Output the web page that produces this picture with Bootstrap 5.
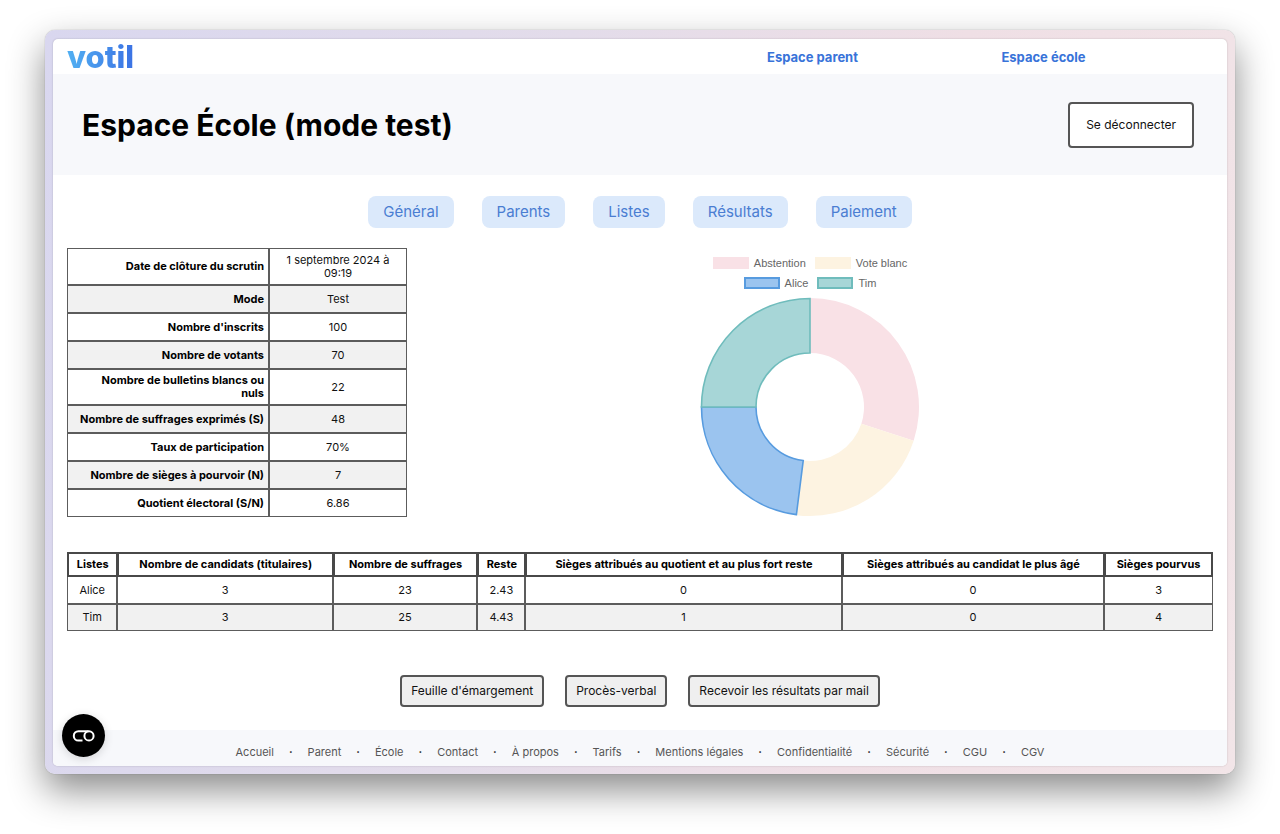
<!DOCTYPE html>
<html lang="fr">
<head>
<meta charset="utf-8">
<meta name="viewport" content="width=device-width, initial-scale=1">
<title>Votil – Espace École</title>
<link href="https://cdn.jsdelivr.net/npm/bootstrap@5.3.0/dist/css/bootstrap.min.css" rel="stylesheet">
<style>
  body { font-family: Inter, "Open Sans", sans-serif; font-size: 11px; line-height: 13px; color: #111; background: #fff; padding: 30px 45px 60px; }
  a { text-decoration: none; }
  .backdrop-frame { padding: 9px 8px 8px; border-radius: 10px; background: linear-gradient(100deg, #d9d7ef 0%, #e3dcea 40%, #efdfe5 70%, #f2e5e8 100%); box-shadow: 0 0 1px rgba(0,0,0,.45), 0 16px 36px rgba(0,0,0,.46); }
  .app-window { border-radius: 5px; background: #fff; box-shadow: 0 0 2px rgba(0,0,0,.2); }
  .topbar { height: 35px; padding: 0 68px 0 14px; }
  .brand-word { font-size: 31px; line-height: 34px; font-weight: 800; background: linear-gradient(90deg, #52b0f2, #3b72e4); -webkit-background-clip: text; background-clip: text; color: transparent; }
  .top-link { flex: 0 1 231px; font-size: 13px; line-height: 16px; font-weight: 700; color: #3873d9; text-align: center; }
  .band { background: #f7f8fb; }
  .page-head { height: 101px; padding: 0 33px 0 29px; }
  .page-head h1 { font-size: 30px; line-height: 36px; font-weight: 700; color: #000; }
  .btn-plain { --bs-btn-border-width: 2px; --bs-btn-border-color: #555; --bs-btn-color: #111; --bs-btn-font-size: 12px; --bs-btn-line-height: 16px; --bs-btn-padding-x: 9px; --bs-btn-padding-y: 6px; --bs-btn-border-radius: 4px; --bs-btn-bg: #efefef; }
  .btn-logout { --bs-btn-bg: #fff; --bs-btn-padding-x: 16px; --bs-btn-padding-y: 13px; }
  .tabs { gap: 28px; padding-top: 21px; }
  .tab { font-size: 15px; line-height: 20px; padding: 6px 15px; border-radius: 8px; background: #dbe9fb; color: #4a7dd2; }
  .content { padding: 20px 14px 23px; }
  .grid-table { border-collapse: separate; border-spacing: 0; table-layout: fixed; }
  .grid-table th, .grid-table td { border: 1px solid #5c5c5c; vertical-align: middle; }
  .summary { width: 340px; }
  .summary th { width: 202px; padding: 4px; text-align: right; font-weight: 700; color: #000; }
  .summary td { padding: 4px 12px; text-align: center; }
  .summary tr { height: 28px; }
  .summary tr:first-child { height: 37px; }
  .striped tr:nth-child(even) > * { background: #f1f1f1; }
  .results { margin-top: 35px; text-align: center; }
  .results th { height: 25px; font-weight: 700; color: #000; border-color: #484848; border-width: 2px 1px 2px 2px; }
  .results th:last-child { border-right-width: 2px; }
  .results td { height: 27px; }
  .results tbody tr:first-child td { border-top: 0; }
  .actions { gap: 21px; padding-top: 44px; }
  .chart { width: 220px; padding-top: 9px; font-family: "Liberation Sans", sans-serif; color: #666; }
  .legend-row { height: 20px; gap: 9px; }
  .swatch { width: 36px; height: 12px; margin-right: 5px; border: 2px solid; }
  .sw-abst { background: #f9e1e6; border-color: #f9e1e6; }
  .sw-blank { background: #fdf3e1; border-color: #fdf3e1; }
  .sw-alice { background: #9bc4ef; border-color: #579bdf; }
  .sw-tim { background: #a7d6d7; border-color: #6fbcbc; }
  .site-foot { height: 36px; padding-top: 9px; border-radius: 0 0 5px 5px; color: #222; }
  .site-foot a { color: #555; }
  .site-foot ul { gap: 15px; }
  .dot { font-weight: 700; }
  .consent { left: 9px; bottom: 9px; width: 43px; height: 43px; background: #000; box-shadow: 0 2px 10px rgba(0,0,0,.15); }
</style>
</head>
<body>
<div class="backdrop-frame">
  <div class="app-window position-relative">
    <nav class="topbar d-flex align-items-center" aria-label="Navigation principale">
      <a class="brand-word me-auto" href="#">votil</a>
      <a class="top-link" href="#">Espace parent</a>
      <a class="top-link" href="#">Espace école</a>
    </nav>
    <header class="page-head band d-flex align-items-center justify-content-between">
      <h1 class="m-0">Espace École (mode test)</h1>
      <button type="button" class="btn btn-plain btn-logout">Se déconnecter</button>
    </header>
    <nav class="tabs d-flex flex-wrap justify-content-center" aria-label="Sections">
      <a class="tab" href="#">Général</a>
      <a class="tab" href="#">Parents</a>
      <a class="tab" href="#">Listes</a>
      <a class="tab" href="#">Résultats</a>
      <a class="tab" href="#">Paiement</a>
    </nav>
    <main class="content">
      <div class="d-flex flex-wrap align-items-start">
        <table class="grid-table summary striped">
          <tbody>
            <tr><th scope="row">Date de clôture du scrutin</th><td>1 septembre 2024 à 09:19</td></tr>
            <tr><th scope="row">Mode</th><td>Test</td></tr>
            <tr><th scope="row">Nombre d'inscrits</th><td>100</td></tr>
            <tr><th scope="row">Nombre de votants</th><td>70</td></tr>
            <tr><th scope="row">Nombre de bulletins blancs ou<br>nuls</th><td>22</td></tr>
            <tr><th scope="row">Nombre de suffrages exprimés (S)</th><td>48</td></tr>
            <tr><th scope="row">Taux de participation</th><td>70%</td></tr>
            <tr><th scope="row">Nombre de sièges à pourvoir (N)</th><td>7</td></tr>
            <tr><th scope="row">Quotient électoral (S/N)</th><td>6.86</td></tr>
          </tbody>
        </table>
        <div class="chart mx-auto">
          <div class="legend-row d-flex justify-content-center"><span class="d-flex"><i class="swatch sw-abst"></i>Abstention</span><span class="d-flex"><i class="swatch sw-blank"></i>Vote blanc</span></div>
          <div class="legend-row d-flex justify-content-center"><span class="d-flex"><i class="swatch sw-alice"></i>Alice</span><span class="d-flex"><i class="swatch sw-tim"></i>Tim</span></div>
          <svg class="d-block" viewBox="-110 -110 220 220" role="img" aria-label="Répartition des votes">
            <path fill="#f9e1e6" d="M0-109A109 109 0 0 1 103.66 33.68L51.36 16.69A54 54 0 0 0 0-54Z"/>
            <path fill="#fdf3e1" d="M103.66 33.68A109 109 0 0 1-13.66 108.14L-6.77 53.57A54 54 0 0 0 51.36 16.69Z"/>
            <path fill="#9bc4ef" stroke="#579bdf" stroke-width="1.6" d="M-13.6 107.6A108.5 108.5 0 0 1-108.5 0L-54 0A54 54 0 0 0-6.77 53.57Z"/>
            <path fill="#a7d6d7" stroke="#6fbcbc" stroke-width="1.6" d="M-108.5 0A108.5 108.5 0 0 1 0-108.5L0-54A54 54 0 0 0-54 0Z"/>
          </svg>
        </div>
      </div>
      <table class="grid-table results w-100">
        <colgroup>
          <col style="width:4.4%"><col style="width:18.8%"><col style="width:12.6%"><col style="width:4.2%"><col style="width:27.6%"><col style="width:22.9%"><col style="width:9.5%">
        </colgroup>
        <thead>
          <tr><th scope="col">Listes</th><th scope="col">Nombre de candidats (titulaires)</th><th scope="col">Nombre de suffrages</th><th scope="col">Reste</th><th scope="col">Sièges attribués au quotient et au plus fort reste</th><th scope="col">Sièges attribués au candidat le plus âgé</th><th scope="col">Sièges pourvus</th></tr>
        </thead>
        <tbody class="striped">
          <tr><td>Alice</td><td>3</td><td>23</td><td>2.43</td><td>0</td><td>0</td><td>3</td></tr>
          <tr><td>Tim</td><td>3</td><td>25</td><td>4.43</td><td>1</td><td>0</td><td>4</td></tr>
        </tbody>
      </table>
      <div class="actions d-flex flex-wrap justify-content-center">
        <button type="button" class="btn btn-plain">Feuille d'émargement</button>
        <button type="button" class="btn btn-plain">Procès-verbal</button>
        <button type="button" class="btn btn-plain">Recevoir les résultats par mail</button>
      </div>
    </main>
    <footer class="site-foot band d-flex align-items-center justify-content-center">
      <ul class="list-unstyled d-flex m-0">
        <li><a href="#">Accueil</a></li><li class="dot" aria-hidden="true">·</li>
        <li><a href="#">Parent</a></li><li class="dot" aria-hidden="true">·</li>
        <li><a href="#">École</a></li><li class="dot" aria-hidden="true">·</li>
        <li><a href="#">Contact</a></li><li class="dot" aria-hidden="true">·</li>
        <li><a href="#">À propos</a></li><li class="dot" aria-hidden="true">·</li>
        <li><a href="#">Tarifs</a></li><li class="dot" aria-hidden="true">·</li>
        <li><a href="#">Mentions légales</a></li><li class="dot" aria-hidden="true">·</li>
        <li><a href="#">Confidentialité</a></li><li class="dot" aria-hidden="true">·</li>
        <li><a href="#">Sécurité</a></li><li class="dot" aria-hidden="true">·</li>
        <li><a href="#">CGU</a></li><li class="dot" aria-hidden="true">·</li>
        <li><a href="#">CGV</a></li>
      </ul>
    </footer>
    <button type="button" class="consent position-absolute border-0 rounded-circle p-0 d-flex align-items-center justify-content-center" aria-label="Préférences de confidentialité">
      <svg width="24" height="14" viewBox="0 0 24 14" fill="none" stroke="#fff" stroke-width="2"><path d="M16.500 2.200H6.500a4.700 4.700 0 0 0 0 9.400H10.500"/><circle cx="17" cy="6.900" r="4.600"/></svg>
    </button>
  </div>
</div>
<script src="https://cdn.jsdelivr.net/npm/bootstrap@5.3.0/dist/js/bootstrap.bundle.min.js"></script>
</body>
</html>
